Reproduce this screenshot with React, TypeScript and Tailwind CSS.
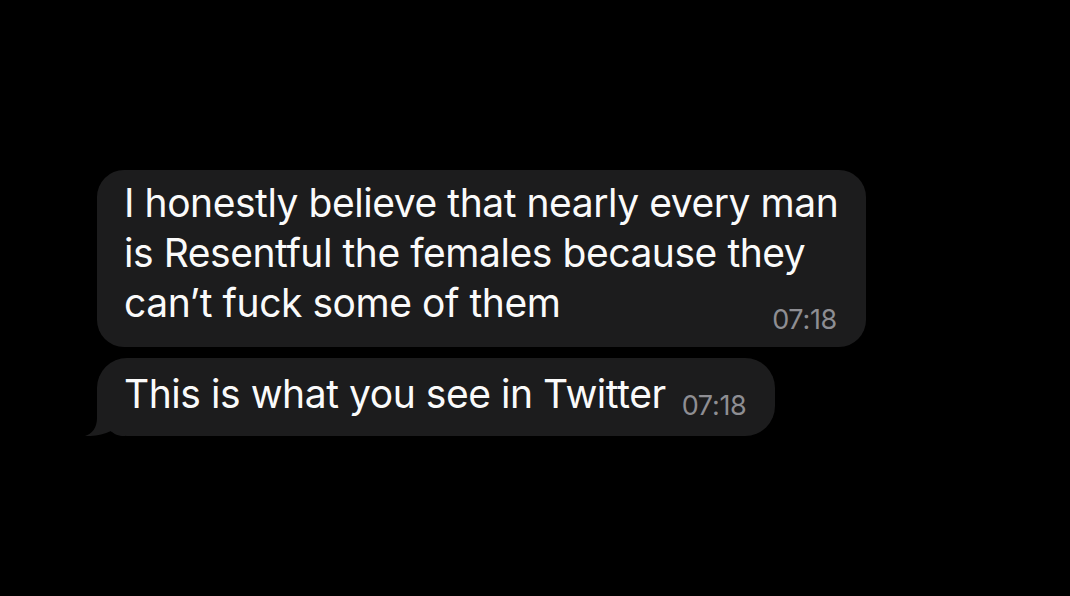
export default function App() {
  return (
    <div className="w-[1070px] h-[596px] bg-black pl-[97px] pt-[170px] font-['Inter','Roboto',sans-serif] text-white">
      <div className="flex flex-col gap-[11px]">
        {/* First bubble */}
        <div className="w-[769px] h-[177px] rounded-[27px] bg-[#1c1c1d] pl-[27px] pr-[29px] pt-[8px]">
          <div className="text-[39px] leading-[50px] tracking-[-0.45px] whitespace-nowrap text-[#fafafa]">
            <div>I honestly believe that nearly every man</div>
            <div>is Resentful the females because they</div>
            <div className="flex items-baseline justify-between">
              <span>can’t fuck some of them</span>
              <span className="text-[27px] tracking-[-0.3px] text-[#8e8e93] translate-y-[12px]">07:18</span>
            </div>
          </div>
        </div>

        {/* Second bubble with tail */}
        <div className="relative w-[678px] h-[78px] rounded-[30px] bg-[#1c1c1d] pl-[27px] pt-[11px]">
          <svg
            className="absolute left-[-12px] bottom-0"
            width="40"
            height="30"
            viewBox="0 0 40 30"
          >
            <path
              d="M12,0 L12,12 C12,22 7,28 0,30 C9,30.5 18,28.5 26,25 C29,28 33,30 40,30 L40,0 Z"
              fill="#1c1c1d"
            />
          </svg>
          <div className="relative flex items-baseline text-[39px] leading-[50px] tracking-[-0.45px] whitespace-nowrap text-[#fafafa]">
            <span>This is what you see in Twitter</span>
            <span className="ml-[16px] text-[27px] tracking-[-0.3px] text-[#8e8e93] translate-y-[7px]">07:18</span>
          </div>
        </div>
      </div>
    </div>
  );
}
